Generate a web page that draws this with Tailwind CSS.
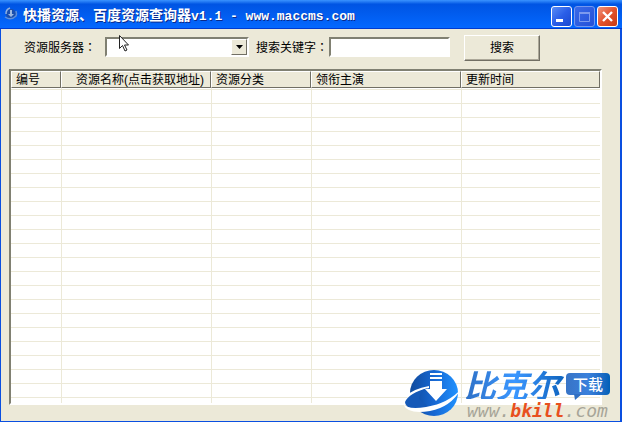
<!DOCTYPE html>
<html lang="zh-CN">
  <head>
    <meta charset="utf-8">
    <title>快播资源、百度资源查询器v1.1</title>
    <script src="https://cdn.jsdelivr.net/npm/@tailwindcss/browser@4"></script>
  </head>
  <body class="h-screen overflow-hidden bg-[#ece9d8] text-xs text-black font-['Liberation_Sans','Noto_Sans_CJK_SC',sans-serif]">
    <div class="relative flex h-full flex-col border-r-2 border-b border-l border-[#0a4fe0]">

      <header class="-mr-0.5 -ml-px flex h-[29px] shrink-0 items-center border-b border-[#003bcf] bg-linear-to-b from-[#3a93ff] via-[#0054e3] via-15% to-[#0468ff] pr-1 pl-1">
        <svg class="h-4 w-4 shrink-0" viewBox="0 0 16 16">
          <circle cx="7" cy="8" r="5" fill="#1a4fae"/>
          <path d="M2 8a6 6 0 0 1 4-6" fill="none" stroke="#8fb0df" stroke-width="1.5"/>
          <path d="M1 11q6 4 11-1q1-2 0-5" fill="none" stroke="#5f8fd8" stroke-width="1.5"/>
          <path d="M6 4h2v4h2l-3 3l-3-3h2z" fill="#9db8e0"/>
        </svg>
        <h1 class="ml-[3px] flex-1 pt-0.5 whitespace-nowrap text-sm font-bold text-white [text-shadow:1px_1px_0_#0a2a8c] font-['Noto_Sans_CJK_SC',sans-serif]">快播资源、百度资源查询器<span class="font-['Liberation_Mono',monospace] text-[13px]">v1.1 - www.maccms.com</span></h1>
        <div class="flex gap-0.5 pt-1">
          <button aria-label="最小化" class="h-[21px] w-[21px] rounded-[3px] border border-white bg-linear-to-br from-[#5a8cf5] via-[#2a5ee8] to-[#1a48d0]">
            <svg class="h-full w-full" viewBox="0 0 19 19"><rect x="4" y="12" width="7" height="3" fill="#fff"/></svg>
          </button>
          <button aria-label="最大化" disabled class="h-[21px] w-[21px] rounded-[3px] border border-[#7597ee] bg-linear-to-br from-[#3a6ae8] to-[#2450d8]">
            <svg class="h-full w-full" viewBox="0 0 19 19"><path d="M4.500 5.500h10v9h-10z" fill="none" stroke="#7c9aee"/><path d="M4 5h11v2H4z" fill="#7c9aee"/></svg>
          </button>
          <button aria-label="关闭" class="h-[21px] w-[21px] rounded-[3px] border border-white bg-linear-to-br from-[#f0937a] via-[#e2522c] to-[#c63a14]">
            <svg class="h-full w-full" viewBox="0 0 19 19"><path d="M5 5l9 9M14 5l-9 9" stroke="#fff" stroke-width="2.400"/></svg>
          </button>
        </div>
      </header>

      <form class="flex h-10 shrink-0 items-center pr-2 pb-1 pl-[23px]">
        <label for="server" class="w-[81px] shrink-0">资源服务器<span lang="zh-TW" class="font-['Noto_Sans_CJK_TC',sans-serif]">：</span></label>
        <div class="relative">
          <select id="server" class="block h-5 w-36 appearance-none border-2 border-t-[#808072] border-r-white border-b-white border-l-[#808072] bg-white">
            <option></option>
          </select>
          <span class="pointer-events-none absolute top-0.5 right-0.5 flex h-4 w-4 items-center justify-center border border-t-white border-r-[#716f64] border-b-[#716f64] border-l-white bg-[#ece9d8]">
            <svg class="h-1 w-[7px]" viewBox="0 0 7 4"><path d="M0 0h7L3.500 4z"/></svg>
          </span>
          <svg class="pointer-events-none absolute -top-0.5 left-3.5 h-[19px] w-3" viewBox="0 0 12 19">
            <path d="M.5.500v13l3-3 2.500 5.500 2-1-2.500-5h4z" fill="#fff" stroke="#222"/>
          </svg>
        </div>
        <label for="keyword" class="ml-[7px] w-[73px] shrink-0">搜索关键字<span lang="zh-TW" class="font-['Noto_Sans_CJK_TC',sans-serif]">：</span></label>
        <input id="keyword" type="text" class="h-5 w-[121px] border-2 border-t-[#808072] border-r-white border-b-white border-l-[#808072] bg-white px-1 outline-none">
        <button type="button" class="mt-0.5 ml-3.5 h-[26px] w-[76px] border border-t-white border-r-[#716f64] border-b-[#716f64] border-l-white bg-[#ece9d8] shadow-[inset_-1px_-1px_0_#aca899]">搜索</button>
      </form>

      <div class="mr-[18px] mb-4 ml-2 min-h-0 flex-1 overflow-hidden border-2 border-t-[#808072] border-r-white border-b-white border-l-[#808072] bg-white">
        <table class="w-full table-fixed border-separate border-spacing-0">
          <colgroup>
            <col class="w-[50px]">
            <col class="w-[150px]">
            <col class="w-[100px]">
            <col class="w-[150px]">
            <col>
          </colgroup>
          <thead>
            <tr class="h-[17px] bg-[#ece9d8] text-left leading-[14px] whitespace-nowrap *:border *:border-t-white *:border-r-[#716f64] *:border-b-[#716f64] *:border-l-white *:pt-px *:pb-0 *:font-normal">
              <th class="px-1">编号</th>
              <th class="pl-3.5">资源名称(点击获取地址)</th>
              <th class="px-1">资源分类</th>
              <th class="px-1">领衔主演</th>
              <th class="px-1">更新时间</th>
            </tr>
          </thead>
          <tbody id="list"></tbody>
        </table>
      </div>

      <a href="#" class="absolute right-2.5 bottom-0 flex items-end">
        <svg class="h-14 w-[62px]" viewBox="0 0 62 56">
          <defs>
            <linearGradient id="globe" x1="0" y1="0" x2="1" y2="0">
              <stop offset="0" stop-color="#104a9c"/>
              <stop offset=".5" stop-color="#1767d2"/>
              <stop offset="1" stop-color="#2192ff"/>
            </linearGradient>
          </defs>
          <ellipse cx="33" cy="28" rx="24" ry="23" fill="url(#globe)"/>
          <!-- ring: upper gap, left blob, lower sweep -->
          <path d="M28 21Q12 24 5 31L9 35Q14 26 28 23z" fill="#fff"/>
          <path d="M27 23Q8 28 4 37Q4 42 12 44L28 42L18 34Q18 28 27 23z" fill="#1559b8"/>
          <path d="M2 39Q7 45 25 42Q48 38 60 24Q50 42 29 46Q7 50 2 39z" fill="#fff"/>
          <path d="M29 8h12v2H29zM29 12h12v2H29zM29 16h12v8h5L35 36L24 24h5z" fill="#fff"/>
        </svg>
        <span class="flex flex-col">
          <span class="flex h-[30px] items-center">
            <span class="w-[103px] bg-linear-to-r from-[#2e6fc4] via-[#3b97ff] to-[#0a62bc] bg-clip-text pl-px font-['Noto_Sans_CJK_SC',sans-serif] text-[32px] leading-[30px] font-bold text-transparent italic">比克尔</span>
            <span class="relative flex h-[22px] w-11 items-center justify-center rounded-sm bg-linear-to-r from-[#3874c6] via-[#3a80dc] to-[#0060b8] font-['Noto_Sans_CJK_SC',sans-serif] text-[15px] leading-5 font-medium text-white">下载
              <svg class="absolute top-[21px] left-2 h-1.5 w-2" viewBox="0 0 8 6"><path d="M0 0h8L1 6z" fill="#2f6fc2"/></svg>
            </span>
          </span>
          <span class="pt-0.5 pl-1 font-['DejaVu_Sans_Mono',monospace] text-lg leading-5 text-[#a7a598] italic">www.<b class="text-[#e8501e]">bkill</b>.com</span>
        </span>
      </a>
    </div>

    <script>
      const list = document.getElementById('list');
      const cells = '<td class="border-b"></td>' + '<td class="border-b border-l"></td>'.repeat(4);
      // first row is the thin strip below the header
      list.innerHTML = '<tr class="h-0.5 *:border-[#ece9d8] *:p-0">' + cells + '</tr>'
        + ('<tr class="h-3.5 *:border-[#ece9d8] *:p-0">' + cells + '</tr>').repeat(23);
    </script>
  </body>
</html>
